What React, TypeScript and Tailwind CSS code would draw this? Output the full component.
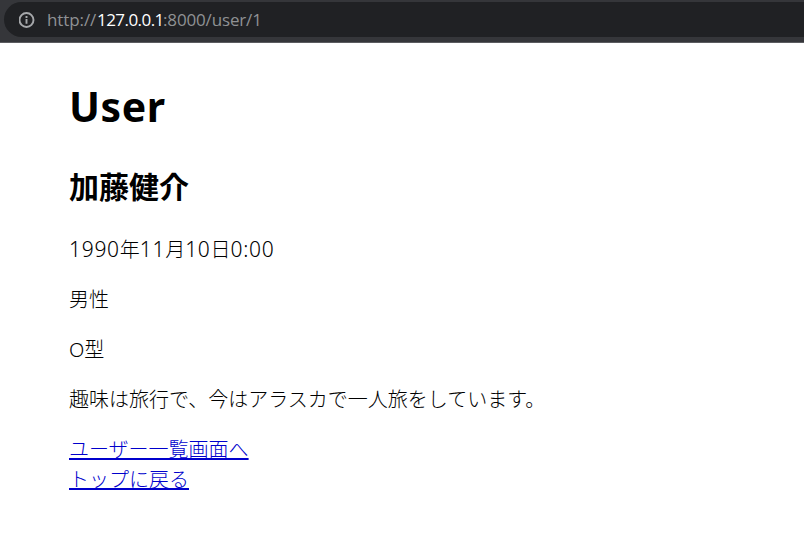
import React from "react";

function InfoIcon() {
  return (
    <svg className="h-4 w-4 shrink-0" viewBox="0 0 16 16" fill="none">
      <circle cx="7.5" cy="8" r="7" stroke="#a6a8ab" strokeWidth="1.9" />
      <path d="M7.5 7v4.8M7.5 4.1v1.8" stroke="#a6a8ab" strokeWidth="1.9" />
    </svg>
  );
}

function AddressBar() {
  return (
    <div className="h-[43px] border-b border-[#5b5c60] bg-[#35363a] pt-[2px] pl-1">
      <div className="flex h-[35px] items-center rounded-l-full bg-[#202124] pl-[15px] text-[#8f9194]">
        <InfoIcon />
        <div className="ml-3 flex whitespace-nowrap font-['Open_Sans','Noto_Sans',sans-serif] text-[17px] leading-6">
          <span className="w-[50px] tracking-[-0.1px]">http://</span>
          <span className="w-[66px] font-medium tracking-[-0.55px] text-white">127.0.0.1</span>
          <span className="tracking-[-0.15px]">:8000/user/1</span>
        </div>
      </div>
    </div>
  );
}

export default function App() {
  return (
    <div className="h-[542px] overflow-hidden bg-white">
      <AddressBar />
      <main className="flex flex-col pl-[69px] font-['Noto_Sans','Noto_Sans_CJK_JP',sans-serif] text-xl leading-[30px] font-light text-black">
        <h1 className="mt-[33px] text-[41px] leading-[60px] font-bold tracking-[0.6px]">User</h1>
        <h2 className="mt-7 text-[30px] leading-[45px] font-bold">加藤健介</h2>
        <p className="mt-[25px] text-[21px] tracking-[0.7px]">
          1990<span className="text-xl leading-none tracking-normal">年</span>11
          <span className="text-xl leading-none tracking-normal">月</span>10
          <span className="text-xl leading-none tracking-normal">日</span>0:00
        </p>
        <p className="mt-[21px]">男性</p>
        <p className="mt-5">O型</p>
        <p className="mt-5">趣味は旅行で、今はアラスカで一人旅をしています。</p>
        <nav className="mt-5 flex flex-col items-start text-[#0000cc]">
          <a href="#" className="underline decoration-2 underline-offset-[1px] [text-decoration-skip-ink:none]">ユーザー一覧画面へ</a>
          <a href="#" className="underline decoration-2 underline-offset-[1px] [text-decoration-skip-ink:none]">トップに戻る</a>
        </nav>
      </main>
    </div>
  );
}
